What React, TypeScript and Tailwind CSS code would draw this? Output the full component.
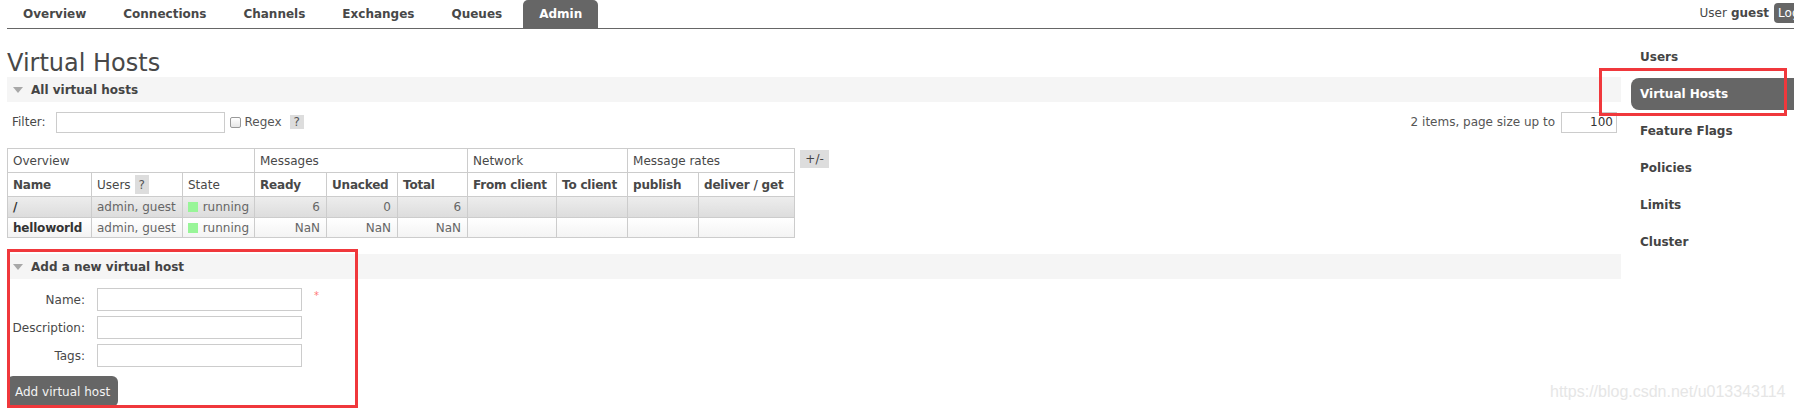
import React from 'react';

const tabs = ['Overview', 'Connections', 'Channels', 'Exchanges', 'Queues', 'Admin'];
const sideItems = ['Users', 'Virtual Hosts', 'Feature Flags', 'Policies', 'Limits', 'Cluster'];

const vhosts = [
  { name: '/', users: 'admin, guest', ready: '6', unacked: '0', total: '6' },
  { name: 'helloworld', users: 'admin, guest', ready: 'NaN', unacked: 'NaN', total: 'NaN' },
];

function Help() {
  return <span className="inline-flex h-[19px] w-[14px] items-center justify-center bg-[#ddd] text-[#555]">?</span>;
}

function SectionHeader({ title }: { title: string }) {
  return (
    <div className="flex h-[25px] items-center bg-[#f5f5f5]">
      <span className="ml-[6px] h-0 w-0 border-x-[5.5px] border-t-[6px] border-x-transparent border-t-[#a8a8a8]" />
      <span className="ml-[8px] font-bold text-[#444]">{title}</span>
    </div>
  );
}

export default function App() {
  const td = 'border border-[#ccc] px-[5px] text-left font-normal whitespace-nowrap';
  const tb = 'border border-[#ccc] px-[5px] text-left font-bold whitespace-nowrap tracking-[-0.2px]';

  return (
    <div className="relative h-[410px] w-full overflow-hidden bg-white font-['DejaVu_Sans',Verdana,sans-serif] text-[12px] text-[#484848]">
      {/* top nav */}
      <header className="ml-[7px] flex h-[29px] border-b border-[#666]">
        {tabs.map((t) => (
          <a
            key={t}
            className={
              t === 'Admin'
                ? 'mr-[5px] flex items-center rounded-t-[5px] bg-[#666] px-4 font-bold text-white'
                : 'mr-[5px] flex items-center px-4 font-bold text-[#484848]'
            }
          >
            {t}
          </a>
        ))}
        <div className="mr-[-33px] ml-auto flex items-center pb-[2px]">
          <span>User</span>
          <b className="ml-[4px]">guest</b>
          <span className="ml-[5px] flex h-[20px] items-center rounded-[4px] bg-[#666] px-[4px] text-white">Log out</span>
        </div>
      </header>

      <div className="flex">
        <main className="ml-[7px] flex-1">
          <h1 className="mt-[21px] text-[24px] font-normal leading-[27px] text-[#484848]">Virtual Hosts</h1>
          <SectionHeader title="All virtual hosts" />

          <div className="mt-[9px] flex h-[22px] items-center justify-between">
            <div className="flex items-center">
              <span className="ml-[5px]">Filter:</span>
              <input className="ml-[10px] h-[21px] w-[169px] border border-[#ccc] bg-white" />
              <span className="ml-[5px] h-[11px] w-[11px] rounded-[2px] border border-[#999] bg-gradient-to-b from-white to-[#e6e6e6]" />
              <span className="ml-[4px] text-[#555]">Regex</span>
              <span className="ml-[8px] inline-flex h-[14px] w-[14px] items-center justify-center bg-[#ddd] text-[#555]">?</span>
            </div>
            <div className="mr-[4px] flex items-center">
              <span className="text-[#555]">2 items, page size up to</span>
              <input
                readOnly
                value="100"
                className="ml-[6px] h-[21px] w-[56px] border border-[#ccc] bg-white pr-[3px] text-right text-[12px] text-[#333]"
              />
            </div>
          </div>

          <div className="mt-[15px] flex items-start">
            <table className="w-[787px] table-fixed border-collapse">
              <colgroup>
                <col className="w-[84px]" />
                <col className="w-[91px]" />
                <col className="w-[72px]" />
                <col className="w-[72px]" />
                <col className="w-[71px]" />
                <col className="w-[70px]" />
                <col className="w-[89px]" />
                <col className="w-[71px]" />
                <col className="w-[71px]" />
                <col className="w-[96px]" />
              </colgroup>
              <thead>
                <tr className="h-[24px]">
                  <th colSpan={3} className={td}>Overview</th>
                  <th colSpan={3} className={td}>Messages</th>
                  <th colSpan={2} className={td}>Network</th>
                  <th colSpan={2} className={td}>Message rates</th>
                </tr>
                <tr className="h-[24px]">
                  <th className={tb}>Name</th>
                  <th className={td}>
                    <span className="flex items-center gap-[4px]">
                      Users <Help />
                    </span>
                  </th>
                  <th className={td}>State</th>
                  <th className={tb}>Ready</th>
                  <th className={tb}>Unacked</th>
                  <th className={tb}>Total</th>
                  <th className={tb}>From client</th>
                  <th className={tb}>To client</th>
                  <th className={tb}>publish</th>
                  <th className={tb}>deliver / get</th>
                </tr>
              </thead>
              <tbody>
                {vhosts.map((v, i) => (
                  <tr
                    key={v.name}
                    className={
                      i === 0
                        ? 'h-[21px] bg-gradient-to-b from-[#ededed] to-[#dcdcdc]'
                        : 'h-[20px] bg-gradient-to-b from-white to-[#f3f3f3]'
                    }
                  >
                    <td className="whitespace-nowrap border border-[#ccc] px-[5px] font-bold tracking-[-0.2px] text-[#333]">{v.name}</td>
                    <td className="whitespace-nowrap border border-[#ccc] px-[5px] text-[#666]">{v.users}</td>
                    <td className="whitespace-nowrap border border-[#ccc] px-[5px] text-[#666]">
                      <span className="flex items-center gap-[5px]">
                        <span className="h-[10px] w-[10px] bg-[#98f598]" />
                        running
                      </span>
                    </td>
                    <td className="border border-[#ccc] px-[6px] text-right text-[#666]">{v.ready}</td>
                    <td className="border border-[#ccc] px-[6px] text-right text-[#666]">{v.unacked}</td>
                    <td className="border border-[#ccc] px-[6px] text-right text-[#666]">{v.total}</td>
                    <td className="border border-[#ccc]" />
                    <td className="border border-[#ccc]" />
                    <td className="border border-[#ccc]" />
                    <td className="border border-[#ccc]" />
                  </tr>
                ))}
              </tbody>
            </table>
            <span className="ml-[5px] mt-[2px] flex h-[18px] w-[29px] items-center justify-center bg-[#ddd] text-[#444]">+/-</span>
          </div>

          <div className="mt-[16px]">
            <SectionHeader title="Add a new virtual host" />
          </div>

          <div className="mt-[9px] grid grid-cols-[78px_205px_auto] items-center gap-x-[12px] gap-y-[5px]">
            <label className="text-right">Name:</label>
            <input className="h-[23px] border border-[#ccc] bg-white" />
            <span className="-mt-[8px] text-[10px] text-[#f77]">*</span>
            <label className="text-right">Description:</label>
            <input className="h-[23px] border border-[#ccc] bg-white" />
            <span />
            <label className="text-right">Tags:</label>
            <input className="h-[23px] border border-[#ccc] bg-white" />
            <span />
          </div>

          <button className="mt-[9px] flex h-[31px] items-center rounded-[6px] bg-[#666] px-[8px] text-[12px] text-[#f4f4f4]">
            Add virtual host
          </button>
        </main>

        <nav className="w-[173px] shrink-0 pt-[12px]">
          <ul className="flex flex-col gap-[5px]">
            {sideItems.map((s) => (
              <li
                key={s}
                className={
                  s === 'Virtual Hosts'
                    ? 'ml-[10px] flex h-[32px] items-center rounded-l-[8px] bg-[#666] pl-[9px] font-bold text-white'
                    : 'ml-[10px] flex h-[32px] items-center pl-[9px] font-bold text-[#444]'
                }
              >
                {s}
              </li>
            ))}
          </ul>
        </nav>
      </div>

      {/* red annotation boxes drawn over the screenshot */}
      <div className="pointer-events-none absolute left-[7px] top-[249px] h-[159px] w-[351px] border-[3px] border-[#f0383c]" />
      <div className="pointer-events-none absolute left-[1599px] top-[68px] h-[48px] w-[188px] border-[3px] border-[#f0383c]" />

      {/* watermark */}
      <span className="pointer-events-none absolute left-[1550px] top-[382px] font-['Liberation_Sans',Arial,sans-serif] text-[16px] leading-[20px] text-[#e6e6e6]">
        https://blog.csdn.net/u013343114
      </span>
    </div>
  );
}
